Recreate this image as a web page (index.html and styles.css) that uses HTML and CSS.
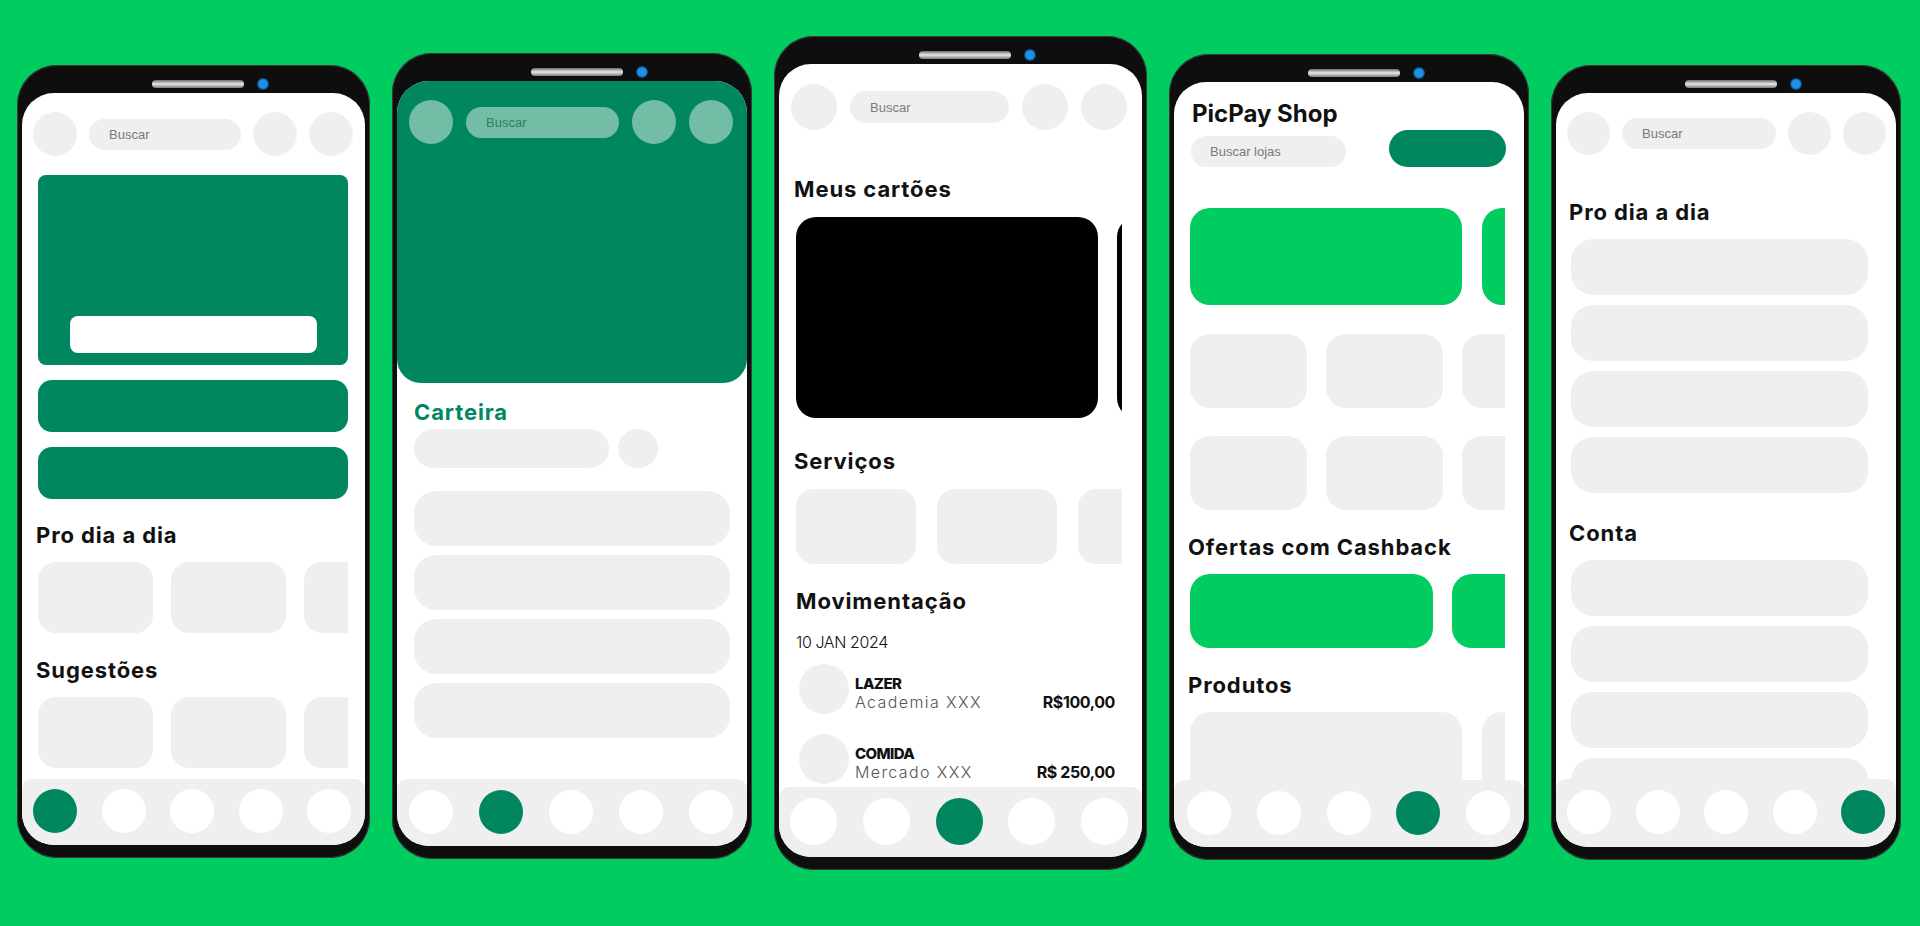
FILE: index.html
```html
<!DOCTYPE html>
<html lang="pt-BR">
<head>
    <meta charset="UTF-8">
    <meta name="viewport" content="width=device-width, initial-scale=1.0">
    <title>PicPay - Telas</title>
    <link rel="stylesheet" href="styles.css">
</head>
<body>
<div class="stage">

    <!-- inicio -->
    <div class="phone phone-1">
        <div class="notch"><span class="speaker"></span><span class="cam"></span></div>
        <div class="screen">
            <div class="content">
                <div class="topbar">
                    <span class="dot"></span>
                    <span class="search">Buscar</span>
                    <span class="dot"></span>
                    <span class="dot"></span>
                </div>
                <div class="hero"><div class="hero-bar"></div></div>
                <div class="green-bar"></div>
                <div class="green-bar"></div>
                <h2 class="title">Pro dia a dia</h2>
                <div class="tile-row">
                    <div class="tile"></div>
                    <div class="tile"></div>
                    <div class="tile"></div>
                </div>
                <h2 class="title">Sugestões</h2>
                <div class="tile-row">
                    <div class="tile"></div>
                    <div class="tile"></div>
                    <div class="tile"></div>
                </div>
            </div>
            <div class="tabbar">
                <span class="tab active"></span>
                <span class="tab"></span>
                <span class="tab"></span>
                <span class="tab"></span>
                <span class="tab"></span>
            </div>
        </div>
    </div>

    <!-- carteira -->
    <div class="phone phone-2">
        <div class="notch"><span class="speaker"></span><span class="cam"></span></div>
        <div class="screen">
            <div class="content">
                <div class="wallet-head">
                    <div class="topbar">
                        <span class="dot"></span>
                        <span class="search">Buscar</span>
                        <span class="dot"></span>
                        <span class="dot"></span>
                    </div>
                </div>
                <h2 class="title green">Carteira</h2>
                <div class="balance-row">
                    <span class="balance-pill"></span>
                    <span class="balance-dot"></span>
                </div>
                <div class="list">
                    <div class="list-item"></div>
                    <div class="list-item"></div>
                    <div class="list-item"></div>
                    <div class="list-item"></div>
                </div>
            </div>
            <div class="tabbar">
                <span class="tab"></span>
                <span class="tab active"></span>
                <span class="tab"></span>
                <span class="tab"></span>
                <span class="tab"></span>
            </div>
        </div>
    </div>

    <!-- cartoes -->
    <div class="phone phone-3">
        <div class="notch"><span class="speaker"></span><span class="cam"></span></div>
        <div class="screen">
            <div class="content">
                <div class="topbar">
                    <span class="dot"></span>
                    <span class="search">Buscar</span>
                    <span class="dot"></span>
                    <span class="dot"></span>
                </div>
                <h2 class="title">Meus cartões</h2>
                <div class="card-row">
                    <div class="card"></div>
                    <div class="card"></div>
                </div>
                <h2 class="title">Serviços</h2>
                <div class="tile-row">
                    <div class="tile"></div>
                    <div class="tile"></div>
                    <div class="tile"></div>
                </div>
                <h2 class="title">Movimentação</h2>
                <div class="date">10 JAN 2024</div>
                <div class="tx">
                    <span class="tx-icon"></span>
                    <div class="tx-info">
                        <div class="tx-cat">LAZER</div>
                        <div class="tx-desc">Academia XXX</div>
                    </div>
                    <div class="tx-value">R$100,00</div>
                </div>
                <div class="tx">
                    <span class="tx-icon"></span>
                    <div class="tx-info">
                        <div class="tx-cat">COMIDA</div>
                        <div class="tx-desc">Mercado XXX</div>
                    </div>
                    <div class="tx-value">R$ 250,00</div>
                </div>
            </div>
            <div class="tabbar">
                <span class="tab"></span>
                <span class="tab"></span>
                <span class="tab active"></span>
                <span class="tab"></span>
                <span class="tab"></span>
            </div>
        </div>
    </div>

    <!-- shop -->
    <div class="phone phone-4">
        <div class="notch"><span class="speaker"></span><span class="cam"></span></div>
        <div class="screen">
            <div class="content">
                <h1 class="shop-title">PicPay Shop</h1>
                <div class="shop-search-row">
                    <span class="search">Buscar lojas</span>
                    <span class="shop-cta"></span>
                </div>
                <div class="banner-row">
                    <div class="banner"></div>
                    <div class="banner"></div>
                </div>
                <div class="tile-row">
                    <div class="tile"></div>
                    <div class="tile"></div>
                    <div class="tile"></div>
                </div>
                <div class="tile-row">
                    <div class="tile"></div>
                    <div class="tile"></div>
                    <div class="tile"></div>
                </div>
                <h2 class="title">Ofertas com Cashback</h2>
                <div class="offer-row">
                    <div class="offer"></div>
                    <div class="offer"></div>
                </div>
                <h2 class="title">Produtos</h2>
                <div class="product-row">
                    <div class="product"></div>
                    <div class="product"></div>
                </div>
            </div>
            <div class="tabbar">
                <span class="tab"></span>
                <span class="tab"></span>
                <span class="tab"></span>
                <span class="tab active"></span>
                <span class="tab"></span>
            </div>
        </div>
    </div>

    <!-- perfil -->
    <div class="phone phone-5">
        <div class="notch"><span class="speaker"></span><span class="cam"></span></div>
        <div class="screen">
            <div class="content">
                <div class="topbar">
                    <span class="dot"></span>
                    <span class="search">Buscar</span>
                    <span class="dot"></span>
                    <span class="dot"></span>
                </div>
                <h2 class="title">Pro dia a dia</h2>
                <div class="list">
                    <div class="list-item"></div>
                    <div class="list-item"></div>
                    <div class="list-item"></div>
                    <div class="list-item"></div>
                </div>
                <h2 class="title">Conta</h2>
                <div class="list">
                    <div class="list-item"></div>
                    <div class="list-item"></div>
                    <div class="list-item"></div>
                    <div class="list-item"></div>
                </div>
            </div>
            <div class="tabbar">
                <span class="tab"></span>
                <span class="tab"></span>
                <span class="tab"></span>
                <span class="tab"></span>
                <span class="tab active"></span>
            </div>
        </div>
    </div>

</div>
</body>
</html>
```

FILE: styles.css
```css
body {
    margin: 0;
    height: 926px;
    overflow: hidden;
    background-color: #00cc60;
    font-family: "Inter", "Liberation Sans", sans-serif;
}
.stage {
    display: flex;
    align-items: flex-start;
    gap: 22px;
    padding-left: 17px;
}

/* moldura do celular */
.phone {
    flex: none;
    background-color: #0e0e0e;
    border-radius: 40px;
    padding: 0 5px 13px;
    box-shadow: inset 0 0 0 1px #3a3a3a;
}
.phone-1 { width: 343px; margin-top: 65px; }
.phone-2 { width: 350px; margin-top: 53px; }
.phone-3 { width: 363px; margin-top: 36px; }
.phone-4 { width: 350px; margin-top: 54px; }
.phone-5 { width: 340px; margin-top: 65px; }

.notch {
    height: 28px;
    box-sizing: border-box;
    display: flex;
    align-items: center;
    justify-content: center;
    gap: 13px;
    padding: 9px 0 0 34px;
}
.speaker {
    width: 92px;
    height: 8px;
    border-radius: 4px;
    background: linear-gradient(#6d6d6d, #e8e8e8 50%, #7a7a7a);
}
.cam {
    width: 12px;
    height: 12px;
    border-radius: 50%;
    background: radial-gradient(circle, #1d90e8 45%, #0b3b66 72%, #111 100%);
}

.screen {
    background-color: #fff;
    border-radius: 32px;
    overflow: hidden;
    display: flex;
    flex-direction: column;
}
.phone-1 .screen { height: 752px; }
.phone-2 .screen { height: 765px; }
.phone-3 .screen { height: 793px; }
.phone-4 .screen { height: 765px; }
.phone-5 .screen { height: 754px; }

.content {
    flex: 1;
    min-height: 0;
    overflow: hidden;
}

/* barra de navegacao */
.tabbar {
    flex: none;
    height: 67px;
    box-sizing: border-box;
    background-color: #efefef;
    border-radius: 10px 10px 0 0;
    display: flex;
    align-items: center;
    justify-content: space-between;
    padding: 0 14px 2px 12px;
}
.phone-1 .tabbar { height: 66px; padding-left: 11px; }
.phone-3 .tabbar { height: 70px; padding-left: 11px; }
.phone-4 .tabbar { padding-left: 13px; }
.phone-5 .tabbar { height: 68px; padding: 0 11px 2px 11px; }
.tab {
    width: 44px;
    height: 44px;
    border-radius: 50%;
    background-color: #fff;
}
.phone-3 .tab { width: 47px; height: 47px; }
.tab.active { background-color: #00875f; }

/* topo */
.topbar {
    display: flex;
    align-items: center;
    gap: 12px;
    padding: 19px 12px 0 11px;
}
.phone-2 .topbar { gap: 13px; padding: 19px 14px 0 12px; }
.phone-3 .topbar { gap: 13px; padding: 20px 15px 0 12px; }
.phone-5 .topbar { padding: 19px 10px 0 11px; }
.dot {
    flex: none;
    width: 44px;
    height: 44px;
    border-radius: 50%;
    background-color: #efefef;
}
.phone-3 .dot { width: 46px; height: 46px; }
.phone-5 .dot { width: 43px; height: 43px; }
.search {
    flex: 1;
    height: 31px;
    border-radius: 16px;
    background-color: #efefef;
    color: #7a7a7a;
    font: 13px "Liberation Sans", Arial, sans-serif;
    display: flex;
    align-items: center;
    padding-left: 20px;
}
.phone-3 .search { height: 32px; }

.title {
    margin: 22px 0 0 14px;
    font: 700 22px/28px "Inter", "Liberation Sans", sans-serif;
    letter-spacing: 0.9px;
    color: #111;
}
.title.green { color: #00875f; }

.tile-row {
    display: flex;
    gap: 18px;
    margin: 13px 17px 0 16px;
    overflow: hidden;
}
.tile {
    flex: none;
    width: 115px;
    height: 71px;
    border-radius: 18px;
    background-color: #efefef;
}

/* tela 1 */
.hero {
    margin: 19px 17px 0 16px;
    height: 190px;
    box-sizing: border-box;
    background-color: #00875f;
    border-radius: 8px;
    display: flex;
    align-items: flex-end;
    justify-content: center;
    padding-bottom: 12px;
}
.hero-bar {
    width: 247px;
    height: 37px;
    background-color: #fff;
    border-radius: 8px;
}
.green-bar {
    margin: 15px 17px 0 16px;
    height: 52px;
    background-color: #00875f;
    border-radius: 14px;
}
.phone-1 .title + .tile-row + .title { margin-top: 23px; }

/* tela 2 */
.wallet-head {
    height: 302px;
    background-color: #00875f;
    border-radius: 0 0 24px 24px;
}
.wallet-head .dot,
.wallet-head .search {
    background-color: rgba(255, 255, 255, 0.45);
}
.wallet-head .search { color: #2f7d62; }
.phone-2 .title { margin: 15px 0 0 17px; }
.balance-row {
    display: flex;
    gap: 9px;
    margin: 3px 0 0 17px;
}
.balance-pill {
    width: 195px;
    height: 39px;
    border-radius: 20px;
    background-color: #efefef;
}
.balance-dot {
    width: 40px;
    height: 39px;
    border-radius: 50%;
    background-color: #efefef;
}
.list {
    display: flex;
    flex-direction: column;
    gap: 9px;
    margin: 23px 17px 0 17px;
}
.list-item {
    height: 55px;
    border-radius: 22px;
    background-color: #efefef;
}

/* tela 3 */
.phone-3 .title { margin: 29px 0 0 15px; }
.phone-3 .topbar + .title { margin-top: 45px; }
.phone-3 .tile-row + .title { margin: 23px 0 0 17px; }
.card-row {
    display: flex;
    gap: 19px;
    margin: 14px 20px 0 17px;
    overflow: hidden;
}
.card {
    flex: none;
    width: 302px;
    height: 201px;
    border-radius: 20px;
    background-color: #000;
}
.phone-3 .tile-row { gap: 21px; margin: 14px 20px 0 17px; }
.phone-3 .tile { width: 120px; height: 75px; }
.date {
    margin: 17px 0 0 17px;
    font-size: 16px;
    font-weight: 300;
    line-height: 20px;
    letter-spacing: -0.4px;
    color: #111;
}
.tx {
    display: flex;
    align-items: flex-start;
    margin: 12px 27px 0 20px;
}
.tx + .tx { margin-top: 20px; }
.tx-icon {
    flex: none;
    width: 50px;
    height: 50px;
    border-radius: 50%;
    background-color: #efefef;
}
.tx-info {
    margin-left: 6px;
    padding-top: 11px;
}
.tx-cat {
    font-size: 15px;
    font-weight: 800;
    line-height: 18px;
    letter-spacing: -0.6px;
    color: #111;
}
.tx-desc {
    font-size: 16px;
    font-weight: 300;
    line-height: 18px;
    letter-spacing: 1.4px;
    color: #555;
}
.tx-value {
    margin-left: auto;
    padding-top: 29px;
    font-size: 16px;
    font-weight: 700;
    line-height: 18px;
    letter-spacing: -0.4px;
    color: #111;
}

/* tela 4 */
.shop-title {
    margin: 0;
    padding: 17px 0 0 18px;
    font: 700 24px/30px "Inter", "Liberation Sans", sans-serif;
    color: #111;
}
.shop-search-row {
    display: flex;
    justify-content: space-between;
    align-items: flex-end;
    margin: 1px 18px 0 17px;
}
.shop-search-row .search {
    flex: none;
    width: 155px;
    box-sizing: border-box;
    padding-left: 19px;
}
.shop-cta {
    width: 117px;
    height: 37px;
    border-radius: 19px;
    background-color: #00875f;
}
.banner-row,
.offer-row,
.product-row {
    display: flex;
    gap: 20px;
    margin: 41px 19px 0 16px;
    overflow: hidden;
}
.banner {
    flex: none;
    width: 272px;
    height: 97px;
    border-radius: 20px;
    background-color: #00cc60;
}
.phone-4 .tile-row { gap: 19px; margin: 29px 19px 0 16px; }
.phone-4 .tile-row + .tile-row { margin-top: 28px; }
.phone-4 .tile { width: 117px; height: 74px; border-radius: 20px; }
.phone-4 .title { margin: 23px 0 0 14px; }
.offer-row { gap: 19px; margin-top: 13px; }
.offer {
    flex: none;
    width: 243px;
    height: 74px;
    border-radius: 20px;
    background-color: #00cc60;
}
.product-row { margin-top: 13px; }
.product {
    flex: none;
    width: 272px;
    height: 140px;
    border-radius: 20px;
    background-color: #efefef;
}

/* tela 5 */
.phone-5 .title { margin: 26px 0 0 13px; }
.phone-5 .topbar + .title { margin-top: 43px; }
.phone-5 .list {
    gap: 10px;
    margin: 13px 28px 0 15px;
}
.phone-5 .list-item { height: 56px; }
```
